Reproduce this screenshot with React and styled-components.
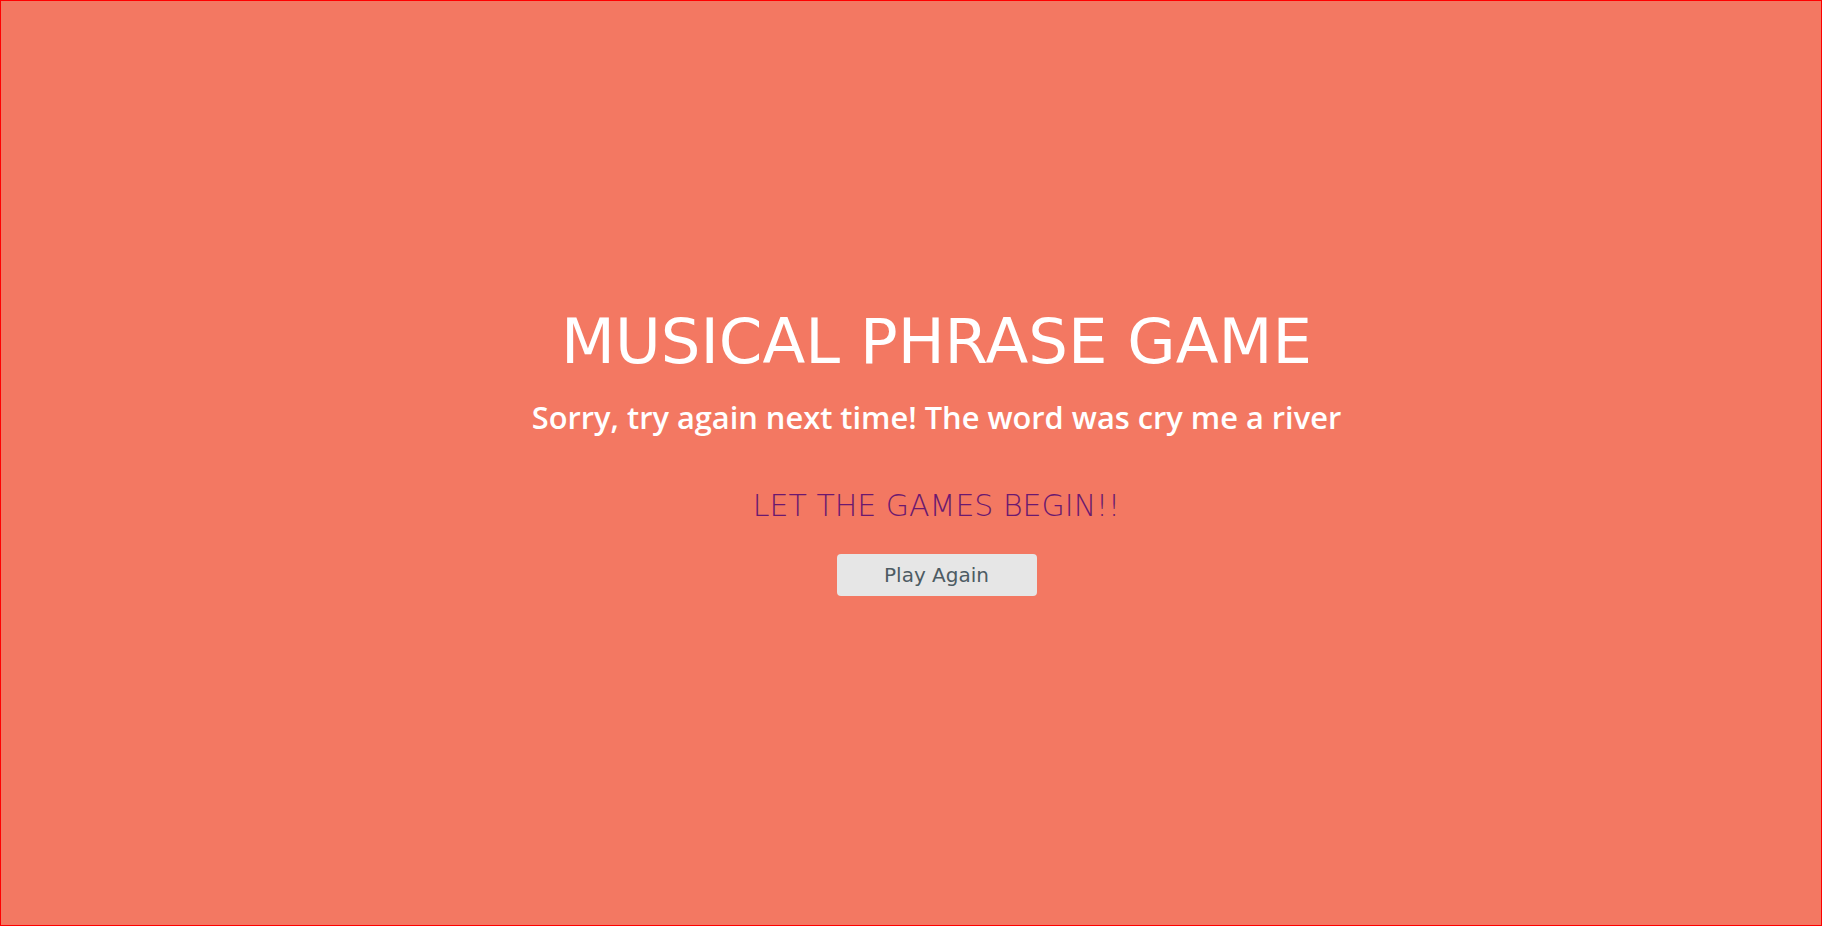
import React from "react";
import styled, { createGlobalStyle } from "styled-components";

const GlobalStyle = createGlobalStyle`
  html, body {
    margin: 0;
    padding: 0;
  }
  body {
    background-color: #f37862;
    font-family: "DejaVu Sans", "Open Sans", sans-serif;
  }
`;

const App = () => {
  return (
    <>
      <GlobalStyle />
      <Page>
        <Title>MUSICAL PHRASE GAME</Title>
        <Message>Sorry, try again next time! The word was cry me a river</Message>
        <Prompt>LET THE GAMES BEGIN!!</Prompt>
        <PlayButton>Play Again</PlayButton>
      </Page>
    </>
  );
};

const Page = styled.div`
  box-sizing: border-box;
  height: 100vh;
  border: 1px solid #ff0000;
  padding: 0 0 26px 51px;
  display: flex;
  flex-direction: column;
  align-items: center;
  justify-content: center;
  text-align: center;
`;

const Title = styled.h1`
  margin: 0;
  font-size: 62.5px;
  font-weight: 400;
  line-height: 1.2;
  color: #ffffff;
`;

const Message = styled.h2`
  margin: 20px 0 0;
  font-family: "Open Sans", "DejaVu Sans", sans-serif;
  font-size: 30.8px;
  font-weight: 600;
  line-height: 1.2;
  color: #ffffff;
`;

const Prompt = styled.h3`
  margin: 52px 0 0;
  font-size: 30px;
  font-weight: 300;
  line-height: 1.2;
  color: #6b1870;
`;

const PlayButton = styled.button`
  margin-top: 30px;
  width: 200px;
  height: 42px;
  border: none;
  border-radius: 4px;
  background-color: #e6e6e6;
  color: #4d5b63;
  font-family: inherit;
  font-size: 20px;
  cursor: pointer;
`;

export default App;
